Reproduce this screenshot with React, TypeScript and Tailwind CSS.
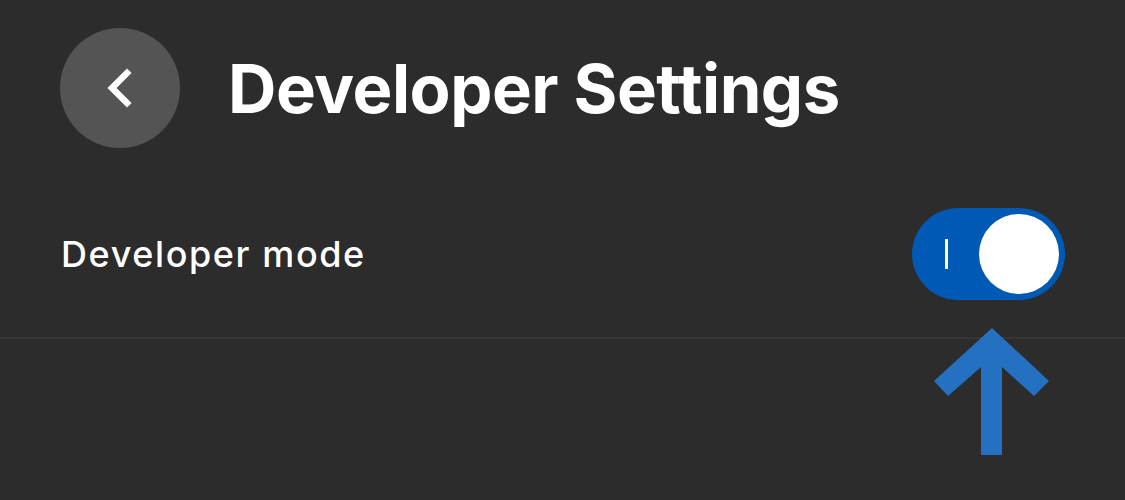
import React from "react";

function BackButton() {
  return (
    <button className="flex h-[120px] w-[120px] shrink-0 items-center justify-center rounded-full bg-[#545454]">
      <svg width="120" height="120" viewBox="0 0 120 120" fill="none">
        <polyline
          points="67,45 52,60 67,75"
          stroke="#ffffff"
          strokeWidth="6.5"
          strokeLinecap="square"
          strokeLinejoin="miter"
        />
      </svg>
    </button>
  );
}

function Toggle() {
  return (
    <div className="flex h-[92px] w-[153px] items-center justify-between rounded-full bg-[#0059b4] pl-[33px] pr-[6px]">
      <span className="h-[30px] w-[3px] bg-white" />
      <span className="h-[80px] w-[80px] rounded-full bg-white" />
    </div>
  );
}

function PointerArrow() {
  return (
    <svg
      className="absolute left-[930px] top-[325px]"
      width="124"
      height="134"
      viewBox="930 325 124 134"
    >
      <polygon
        points="992,328 1049,381 1034,396 1002,367 1002,455 981,455 981,367 948,396 934,381"
        fill="#2471c2"
      />
    </svg>
  );
}

export default function App() {
  return (
    <div
      className="relative h-[500px] w-[1125px] overflow-hidden bg-[#2c2c2c] text-white"
      style={{ fontFamily: "Inter, 'Noto Sans', sans-serif" }}
    >
      <div className="flex items-center gap-[48px] pl-[60px] pt-[28px]">
        <BackButton />
        <h1 className="text-[67px] font-bold leading-none tracking-[-0.5px]">
          Developer Settings
        </h1>
      </div>
      <div className="flex items-center justify-between pl-[61px] pr-[60px] pt-[60px] pb-[37px]">
        <span className="text-[36px] font-medium tracking-[1.6px]">Developer mode</span>
        <Toggle />
      </div>
      <div className="h-[2px] w-full bg-[#363636]" />
      <PointerArrow />
    </div>
  );
}
